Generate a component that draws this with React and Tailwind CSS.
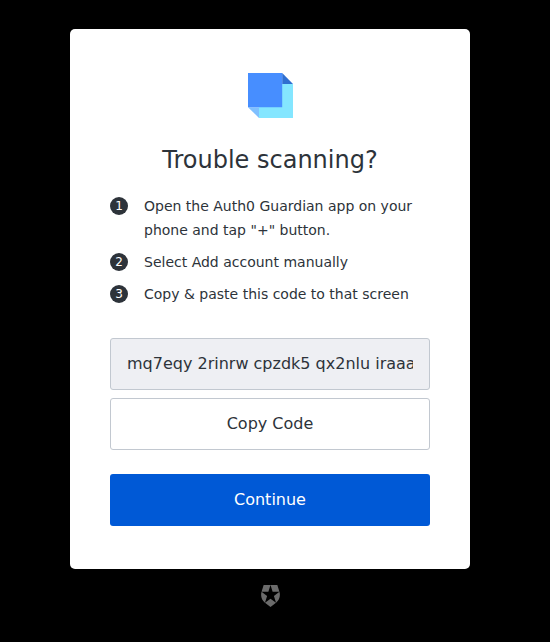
const steps = [
  'Open the Auth0 Guardian app on your phone and tap "+" button.',
  'Select Add account manually',
  'Copy & paste this code to that screen',
];

function Logo() {
  return (
    <svg width="45" height="45" viewBox="0 0 45 45" aria-hidden="true">
      <path d="M11 11h34v34H11z" fill="#84e6ff" />
      <path d="M34.2 0L45 11H34.2z" fill="#2f6fd0" />
      <path d="M0 34.2h11V45z" fill="#80c0ff" />
      <path d="M0 0h34.2v34.2H0z" fill="#478eff" />
    </svg>
  );
}

function Badge() {
  return (
    <svg width="19" height="22" viewBox="1.4 0 21.2 24" preserveAspectRatio="none" fill="#6b6b6b" aria-hidden="true">
      <path d="M21.98 7.448L19.62 0H4.347L2.02 7.448c-1.352 4.312.03 9.206 3.815 12.015L12.007 24l6.157-4.552c3.755-2.81 5.182-7.688 3.815-12.015l-6.16 4.58 2.343 7.45-6.157-4.597-6.158 4.58 2.358-7.433-6.188-4.55 7.63-.045L12.008 0l2.356 7.404 7.615.044z" />
    </svg>
  );
}

export default function App() {
  return (
    <div className="flex h-screen flex-col items-center overflow-hidden bg-black pr-[10px] pt-[29px] font-['DejaVu_Sans',sans-serif] text-[#2d333a]">
      <main className="flex h-[540px] w-[400px] shrink-0 flex-col rounded-[5px] bg-white px-10 pt-11">
        <header className="flex flex-col items-center">
          <Logo />
          <h1 className="mt-6 text-2xl leading-9">Trouble scanning?</h1>
        </header>
        <ol className="mt-4 flex flex-col gap-2 text-sm leading-6">
          {steps.map((step, i) => (
            <li key={step} className="flex gap-4">
              <span className="mt-[3px] flex size-[18px] shrink-0 items-center justify-center rounded-full bg-[#2d333a] text-xs leading-none text-white">
                {i + 1}
              </span>
              <span>{step}</span>
            </li>
          ))}
        </ol>
        <input
          readOnly
          aria-label="Code"
          defaultValue="mq7eqy 2rinrw cpzdk5 qx2nlu iraaay"
          className="mt-8 h-[52px] w-full shrink-0 rounded-[3px] border border-[#c2c8d0] bg-[#eeeff3] px-4 pb-0.5 text-base outline-none"
        />
        <button className="mt-2 h-[52px] shrink-0 rounded-[3px] border border-[#c2c8d0] bg-white text-base">
          Copy Code
        </button>
        <button className="mt-6 h-[52px] shrink-0 rounded-[3px] bg-[#0059d6] text-base text-white">
          Continue
        </button>
      </main>
      <footer className="mt-4">
        <Badge />
      </footer>
    </div>
  );
}
